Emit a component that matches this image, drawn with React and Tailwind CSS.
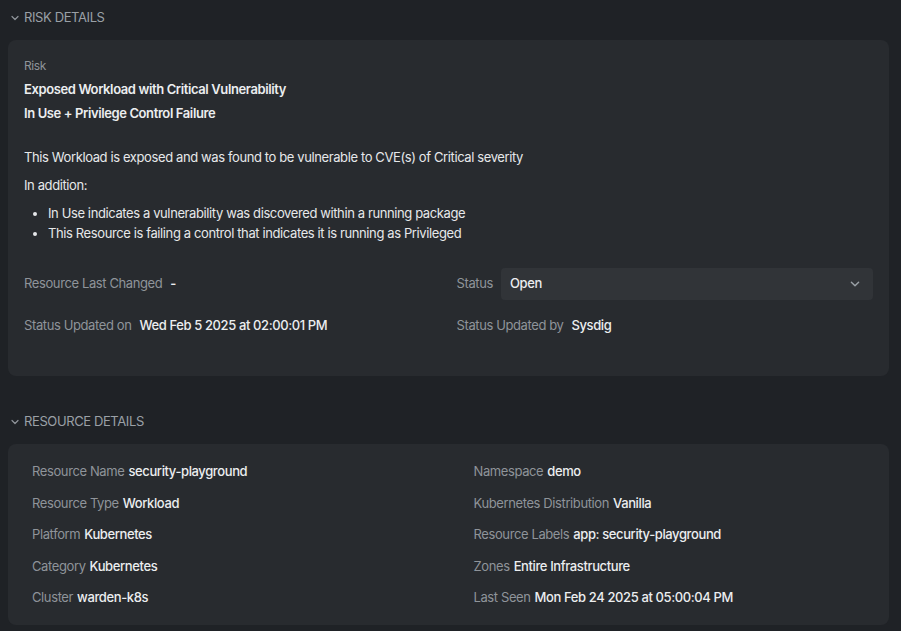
import React from "react";

const Chevron = ({ className }) => (
  <svg className={className} width="10" height="10" viewBox="0 0 10 10" fill="none">
    <path d="M2 3.5 L5 6.5 L8 3.5" stroke="currentColor" strokeWidth="1.2" strokeLinecap="round" strokeLinejoin="round" />
  </svg>
);

const Row = ({ label, value }) => (
  <div className="h-[31.5px] flex items-center">
    <span className="text-[#8f949a]">{label}</span>
    <span className="ml-1 text-[#eceef0] font-medium">{value}</span>
  </div>
);

export default function App() {
  return (
    <div
      className="w-[901px] h-[631px] overflow-hidden bg-[#1f2226] text-[13px] tracking-[-0.03em] text-[#e6e8ea]"
      style={{ fontFamily: "Inter, 'Noto Sans', sans-serif" }}
    >
      <div className="h-[35px] flex items-center pl-[10px] text-[#9aa0a6] gap-[4px]">
        <Chevron className="text-[#8f949a]" />
        <span className="text-[13px]">RISK DETAILS</span>
      </div>
      <div className="mx-[8px] mr-[12px] mt-[5px] rounded-[8px] bg-[#282b2f] px-[16px] pt-[16px] pb-[34px]">
        <div className="text-[#8f949a] text-[12px] h-[19px] leading-[19px]">Risk</div>
        <div className="font-semibold text-[#eceef0] h-[24px] leading-[24px] mt-[2px]">Exposed Workload with Critical Vulnerability</div>
        <div className="font-semibold text-[#eceef0] h-[24px] leading-[24px]">In Use + Privilege Control Failure</div>
        <div className="mt-[20px] h-[24px] leading-[24px] text-[#e6e8ea]">This Workload is exposed and was found to be vulnerable to CVE(s) of Critical severity</div>
        <div className="mt-[4px] h-[24px] leading-[24px]">In addition:</div>
        <ul className="mt-[6px] pl-[24px] list-disc">
          <li className="h-[20px] leading-[20px]">In Use indicates a vulnerability was discovered within a running package</li>
          <li className="h-[20px] leading-[20px]">This Resource is failing a control that indicates it is running as Privileged</li>
        </ul>
        <div className="mt-[25px] grid grid-cols-2 gap-x-[16px]">
          <div className="h-[32px] flex items-center">
            <span className="text-[#8f949a]">Resource Last Changed</span>
            <span className="ml-[8px] font-semibold text-[#eceef0]">-</span>
          </div>
          <div className="h-[32px] flex items-center">
            <span className="text-[#8f949a]">Status</span>
            <div className="ml-[8px] flex-1 h-[32px] rounded-[4px] bg-[#313438] flex items-center justify-between pl-[9px] pr-[12px]">
              <span className="font-medium text-[#eceef0]">Open</span>
              <Chevron className="text-[#9aa0a6] w-[12px] h-[12px]" />
            </div>
          </div>
          <div className="h-[32px] flex items-center mt-[10px]">
            <span className="text-[#8f949a]">Status Updated on</span>
            <span className="ml-[8px] font-medium text-[#eceef0]">Wed Feb 5 2025 at 02:00:01 PM</span>
          </div>
          <div className="h-[32px] flex items-center mt-[10px]">
            <span className="text-[#8f949a]">Status Updated by</span>
            <span className="ml-[8px] font-medium text-[#eceef0]">Sysdig</span>
          </div>
        </div>
      </div>
      <div className="mt-[28px] h-[36px] flex items-center pl-[10px] text-[#9aa0a6] gap-[4px]">
        <Chevron className="text-[#8f949a]" />
        <span className="text-[13px]">RESOURCE DETAILS</span>
      </div>
      <div className="mx-[8px] mr-[12px] mt-[4px] rounded-[8px] bg-[#282b2f] px-[24px] pt-[12px] pb-[11px] grid grid-cols-2 gap-x-[48px]">
        <div>
          <Row label="Resource Name" value="security-playground" />
          <Row label="Resource Type" value="Workload" />
          <Row label="Platform" value="Kubernetes" />
          <Row label="Category" value="Kubernetes" />
          <Row label="Cluster" value="warden-k8s" />
        </div>
        <div className="pl-[1px]">
          <Row label="Namespace" value="demo" />
          <Row label="Kubernetes Distribution" value="Vanilla" />
          <Row label="Resource Labels" value="app: security-playground" />
          <Row label="Zones" value="Entire Infrastructure" />
          <Row label="Last Seen" value="Mon Feb 24 2025 at 05:00:04 PM" />
        </div>
      </div>
    </div>
  );
}
